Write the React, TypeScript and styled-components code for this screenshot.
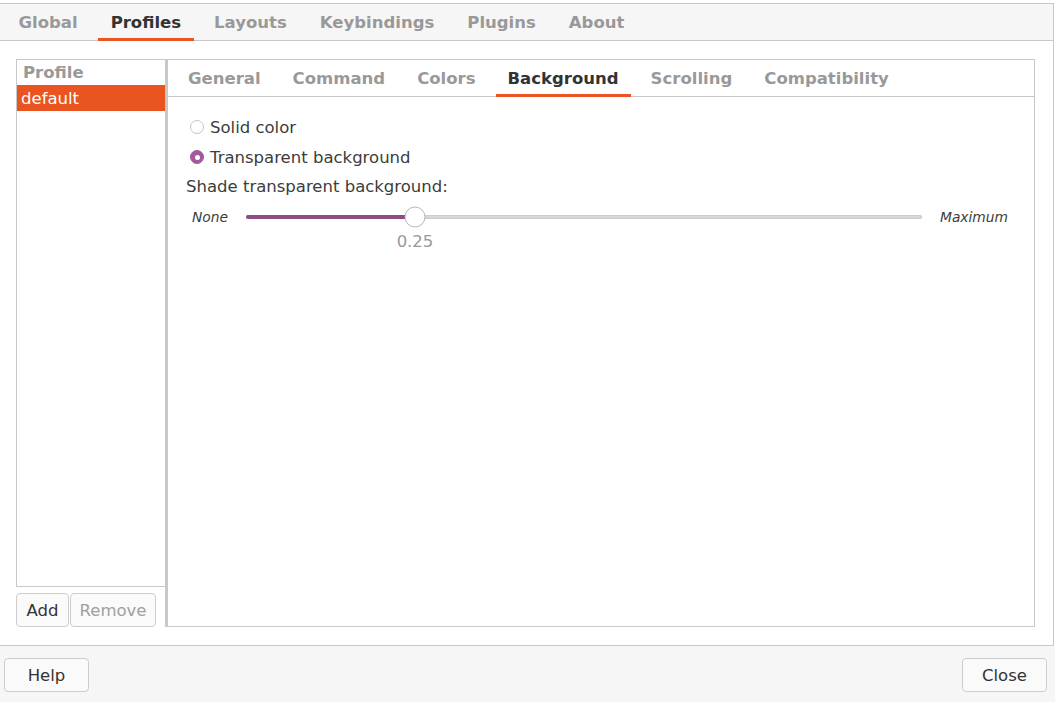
import React from "react";
import styled, { createGlobalStyle } from "styled-components";

const GlobalStyle = createGlobalStyle`
  body {
    margin: 0;
    background: #ffffff;
    font-family: "DejaVu Sans", "Noto Sans", sans-serif;
    font-size: 16.5px;
    color: #3c3c3c;
  }
`;

const topTabs = ["Global", "Profiles", "Layouts", "Keybindings", "Plugins", "About"];
const profileTabs = ["General", "Command", "Colors", "Background", "Scrolling", "Compatibility"];

const shade = 0.25;

const App = () => {
  return (
    <Window>
      <GlobalStyle />
      <Notebook>
        <TabBar $bg="#f6f6f6" $pad={2}>
          {topTabs.map((t) => (
            <Tab key={t} $active={t === "Profiles"} $pad={12.5}>
              {t}
            </Tab>
          ))}
        </TabBar>
        <Body>
          <LeftColumn>
            <ProfileList>
              <ListHeader>Profile</ListHeader>
              <ListRow $selected>default</ListRow>
            </ProfileList>
            <LinkedButtons>
              <SmallButton $width={53}>Add</SmallButton>
              <SmallButton $width={86} $disabled>
                Remove
              </SmallButton>
            </LinkedButtons>
          </LeftColumn>
          <Handle />
          <InnerNotebook>
            <TabBar $bg="#ffffff" $pad={4}>
              {profileTabs.map((t) => (
                <Tab key={t} $active={t === "Background"} $pad={12}>
                  {t}
                </Tab>
              ))}
            </TabBar>
            <Page>
              <RadioRow>
                <Radio $checked={false} />
                <span>Solid color</span>
              </RadioRow>
              <RadioRow>
                <Radio $checked />
                <span>Transparent background</span>
              </RadioRow>
              <FieldLabel>Shade transparent background:</FieldLabel>
              <SliderRow>
                <EndLabel>None</EndLabel>
                <Track>
                  <Fill style={{ width: `${shade * 100}%` }} />
                  <Thumb style={{ left: `${shade * 100}%` }} />
                  <Value style={{ left: `${shade * 100}%` }}>{shade.toFixed(2)}</Value>
                </Track>
                <EndLabel>Maximum</EndLabel>
              </SliderRow>
            </Page>
          </InnerNotebook>
        </Body>
      </Notebook>
      <ActionBar>
        <DialogButton>Help</DialogButton>
        <DialogButton>Close</DialogButton>
      </ActionBar>
    </Window>
  );
};

export default App;

const Window = styled.div`
  width: 1055px;
  height: 702px;
  box-sizing: border-box;
  padding-top: 3px;
  display: flex;
  flex-direction: column;
  background: #ffffff;
`;

const Notebook = styled.div`
  flex: 1;
  width: 1053px;
  display: flex;
  flex-direction: column;
  border-top: 1px solid #c8c8c8;
  border-right: 1px solid #c8c8c8;
  border-bottom: 1px solid #c8c8c8;
`;

const TabBar = styled.div<{ $bg: string; $pad: number }>`
  height: 37px;
  flex-shrink: 0;
  display: flex;
  align-items: stretch;
  padding-left: ${({ $pad }) => $pad}px;
  background: ${({ $bg }) => $bg};
  box-shadow: inset 0 -1px 0 #c8c8c8;
`;

const Tab = styled.div<{ $active?: boolean; $pad: number }>`
  display: flex;
  align-items: center;
  box-sizing: border-box;
  padding: 2px ${({ $pad }) => $pad}px 0;
  margin: 0 4px;
  font-weight: bold;
  white-space: nowrap;
  color: ${({ $active }) => ($active ? "#333333" : "#999999")};
  border-bottom: 3px solid ${({ $active }) => ($active ? "#e95420" : "transparent")};
`;

const Body = styled.div`
  flex: 1;
  display: flex;
  padding: 18px 18px 18px 16px;
  background: #ffffff;
  min-height: 0;
`;

const LeftColumn = styled.div`
  width: 149px;
  display: flex;
  flex-direction: column;
  gap: 6px;
`;

const ProfileList = styled.div`
  flex: 1;
  border: 1px solid #c8c8c8;
  border-right: none;
  background: #ffffff;
`;

const ListHeader = styled.div`
  height: 25px;
  display: flex;
  align-items: center;
  padding-left: 6px;
  font-weight: bold;
  color: #999999;
`;

const ListRow = styled.div<{ $selected?: boolean }>`
  height: 26px;
  display: flex;
  align-items: center;
  padding-left: 4px;
  background: ${({ $selected }) => ($selected ? "#e95420" : "transparent")};
  color: ${({ $selected }) => ($selected ? "#ffffff" : "#3c3c3c")};
`;

const LinkedButtons = styled.div`
  height: 34px;
  display: flex;
  gap: 1px;
`;

const SmallButton = styled.div<{ $width: number; $disabled?: boolean }>`
  width: ${({ $width }) => $width}px;
  box-sizing: border-box;
  display: flex;
  align-items: center;
  justify-content: center;
  border: 1px solid #cdcdcd;
  border-radius: 4px;
  background: #fafafa;
  color: ${({ $disabled }) => ($disabled ? "#a0a0a0" : "#333333")};
`;

const Handle = styled.div`
  width: 3px;
  background: #c8c8c8;
`;

const InnerNotebook = styled.div`
  flex: 1;
  display: flex;
  flex-direction: column;
  border-top: 1px solid #c8c8c8;
  border-right: 1px solid #c8c8c8;
  border-bottom: 1px solid #c8c8c8;
`;

const Page = styled.div`
  flex: 1;
  display: flex;
  flex-direction: column;
  padding: 15px 0 0 18px;
`;

const RadioRow = styled.div`
  height: 30px;
  display: flex;
  align-items: center;
  gap: 6px;
  padding-left: 4px;
`;

const Radio = styled.span<{ $checked: boolean }>`
  width: 14px;
  height: 14px;
  box-sizing: border-box;
  border-radius: 50%;
  display: flex;
  align-items: center;
  justify-content: center;
  border: 1px solid ${({ $checked }) => ($checked ? "#a25a9d" : "#c4c4c4")};
  background: ${({ $checked }) => ($checked ? "#a25a9d" : "#ffffff")};

  &::after {
    content: "";
    width: 5px;
    height: 5px;
    border-radius: 50%;
    background: #ffffff;
    display: ${({ $checked }) => ($checked ? "block" : "none")};
  }
`;

const FieldLabel = styled.div`
  height: 29px;
  display: flex;
  align-items: center;
`;

const SliderRow = styled.div`
  height: 32px;
  display: flex;
  align-items: center;
  gap: 18px;
  padding: 0 26px 0 6px;
`;

const EndLabel = styled.span`
  font-style: italic;
  font-size: 13.8px;
  color: #3c3c3c;
`;

const Track = styled.div`
  flex: 1;
  position: relative;
  height: 4px;
  border-radius: 2px;
  background: #d8d8d8;
  box-shadow: inset 0 0 0 1px #cccccc;
`;

const Fill = styled.div`
  height: 100%;
  border-radius: 2px;
  background: #8f4a88;
`;

const Thumb = styled.div`
  position: absolute;
  top: 50%;
  width: 21px;
  height: 21px;
  box-sizing: border-box;
  border-radius: 50%;
  border: 1px solid #b8b8b8;
  background: #ffffff;
  transform: translate(-50%, -50%);
`;

const Value = styled.div`
  position: absolute;
  top: 17px;
  transform: translateX(-50%);
  color: #999999;
`;

const ActionBar = styled.div`
  height: 56px;
  box-sizing: border-box;
  display: flex;
  justify-content: space-between;
  align-items: flex-start;
  padding: 12px 8px 0 4px;
  background: #f6f6f6;
`;

const DialogButton = styled.div`
  width: 85px;
  height: 34px;
  box-sizing: border-box;
  display: flex;
  align-items: center;
  justify-content: center;
  border: 1px solid #cdcdcd;
  border-radius: 4px;
  background: #fafafa;
  color: #333333;
`;
